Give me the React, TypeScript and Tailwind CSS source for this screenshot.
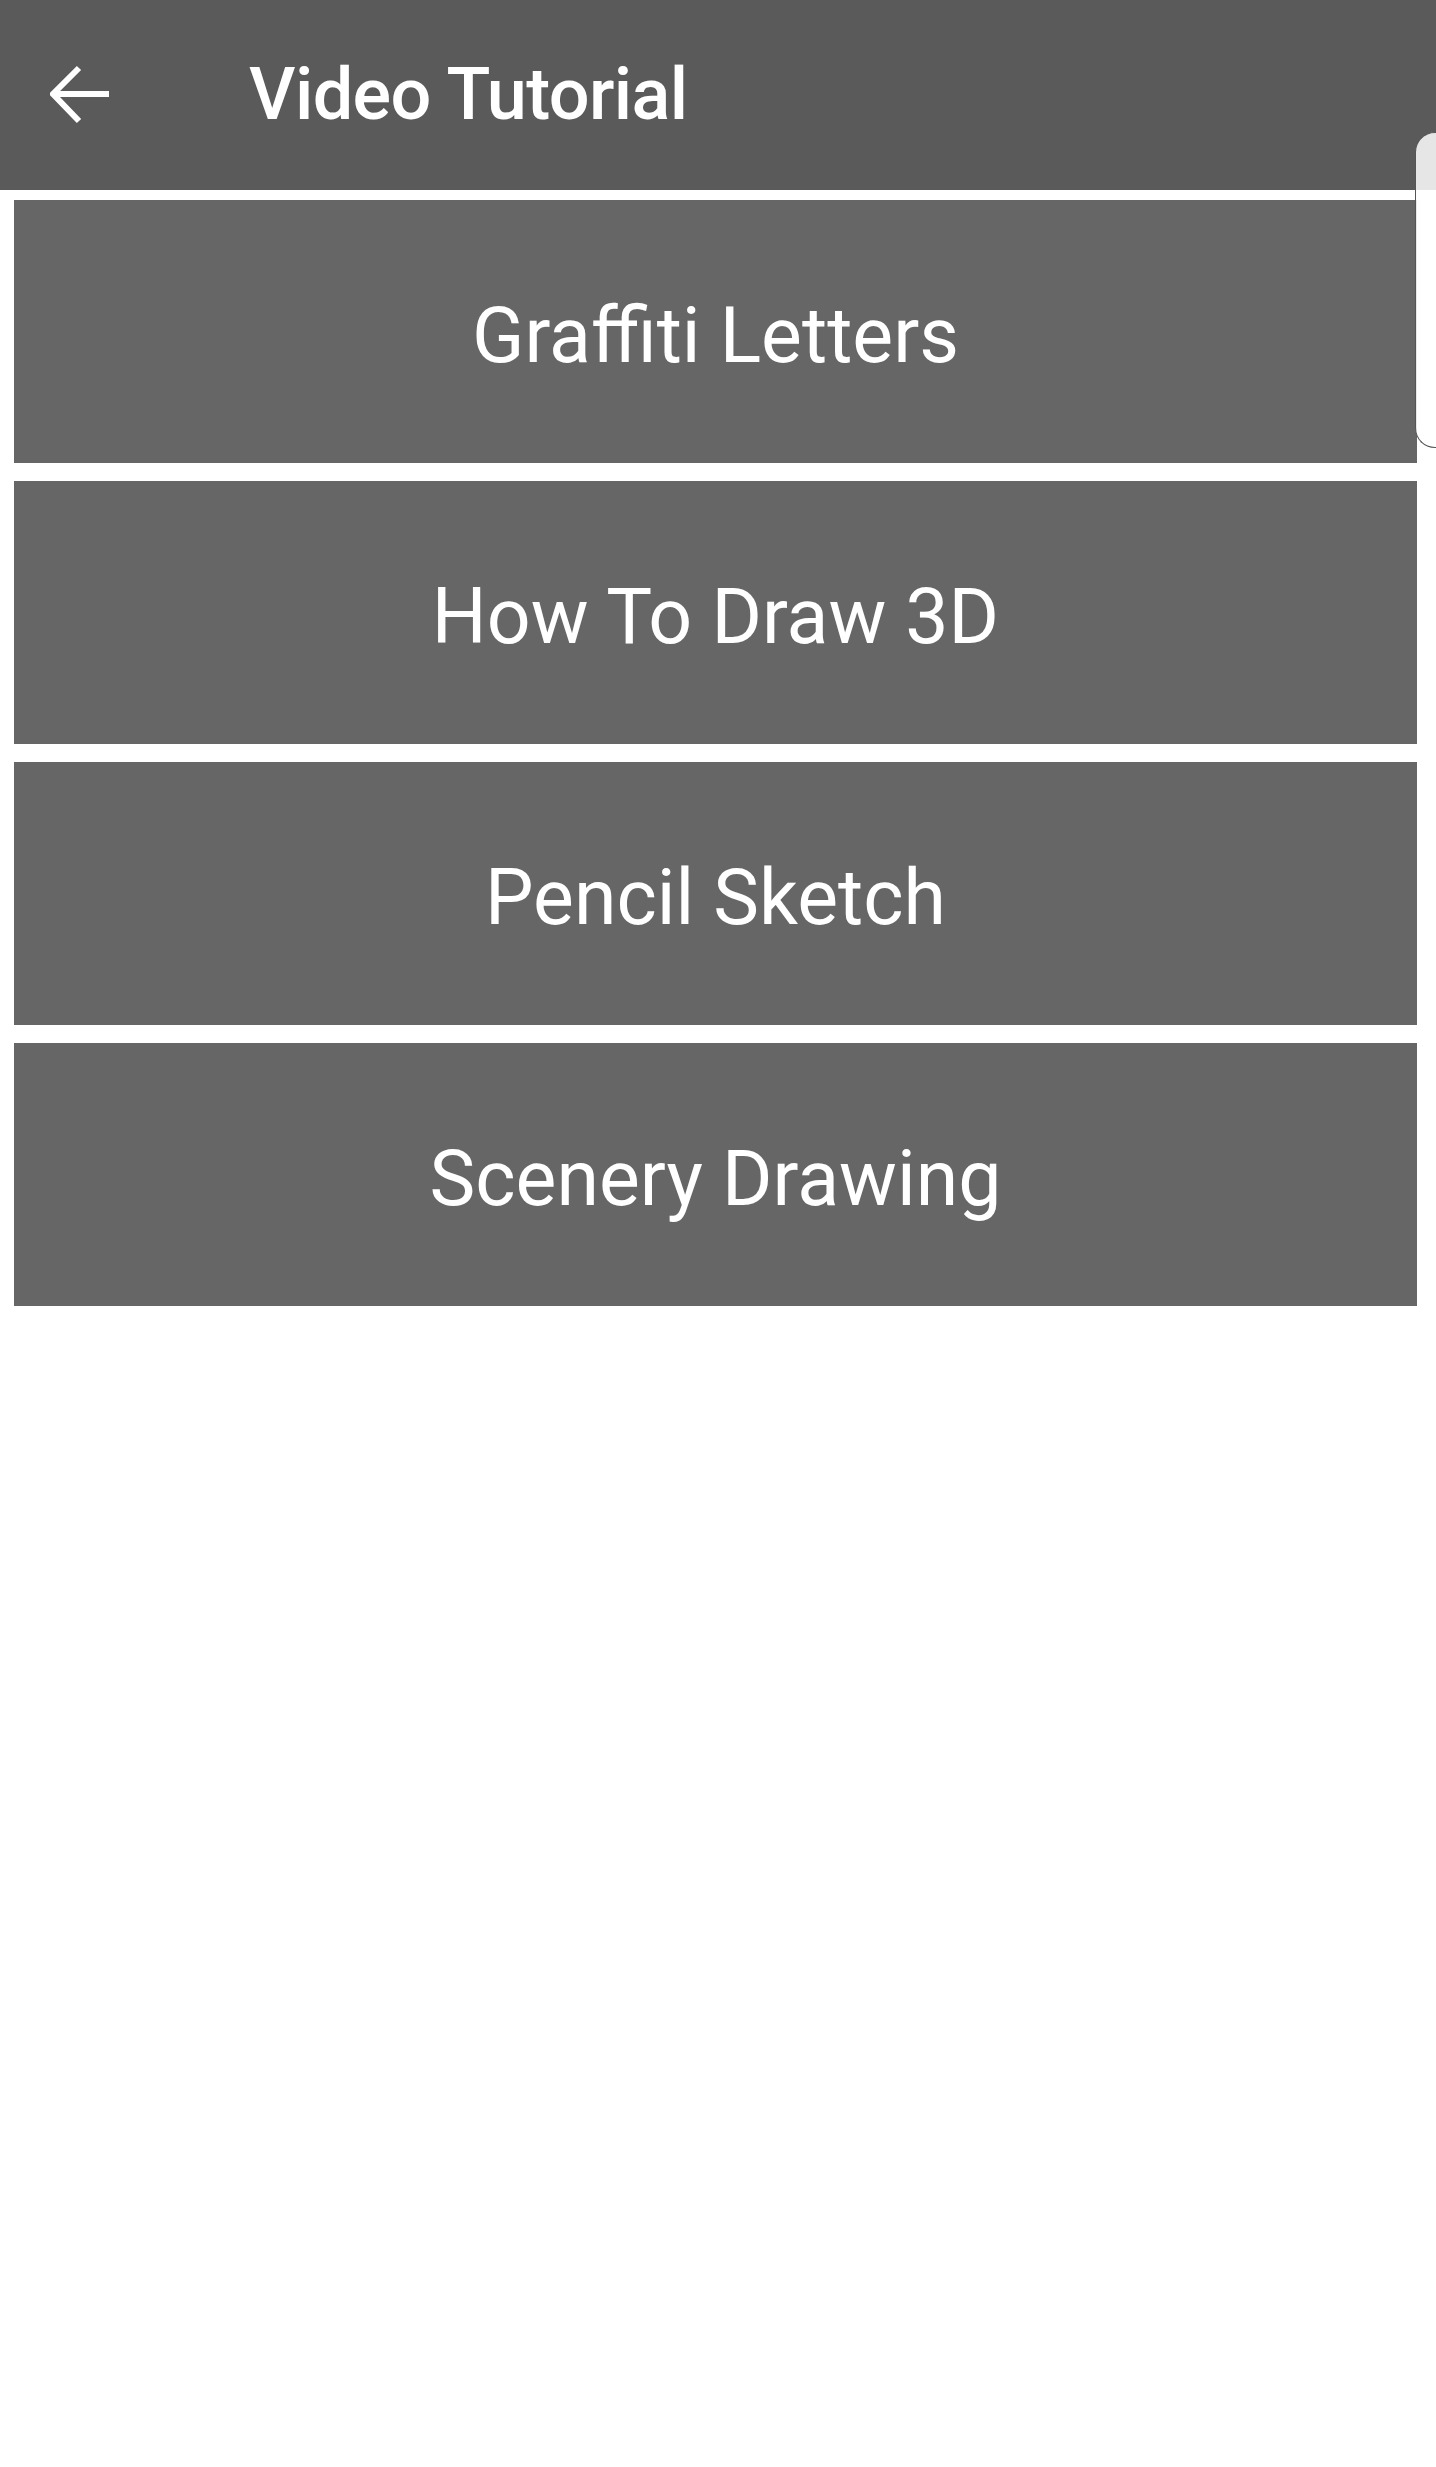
const items = ["Graffiti Letters", "How To Draw 3D", "Pencil Sketch", "Scenery Drawing"];

function BackArrow() {
  return (
    <svg width="60" height="60" viewBox="0 0 60 60" fill="none" stroke="white" strokeWidth="6" strokeLinecap="square">
      <path d="M56 29H6" />
      <path d="M29 3L3 29L29 56" strokeLinecap="butt" />
    </svg>
  );
}

export default function App() {
  return (
    <div className="relative min-h-[2467px] w-full bg-white" style={{ fontFamily: "Roboto, 'Noto Sans', sans-serif" }}>
      <header className="flex h-[190px] items-center bg-[#5a5a5a]">
        <div className="ml-[50px]">
          <BackArrow />
        </div>
        <h1 className="ml-[139px] text-[72px] font-medium leading-none tracking-[-0.6px] text-white">
          Video Tutorial
        </h1>
      </header>

      <div className="flex flex-col gap-[18px] pl-[14px] pr-[19px] pt-[10px]">
        {items.map((label) => (
          <button
            key={label}
            className="flex h-[263px] w-full items-center justify-center bg-[#666666] pt-[9px] text-[77px] leading-none text-white"
          >
            {label}
          </button>
        ))}
      </div>

      {/* side handle overlay */}
      <div className="absolute right-0 top-[132px] h-[316px] w-[21px] rounded-l-[20px] border border-r-0 border-[#555] bg-white/85" />
    </div>
  );
}
